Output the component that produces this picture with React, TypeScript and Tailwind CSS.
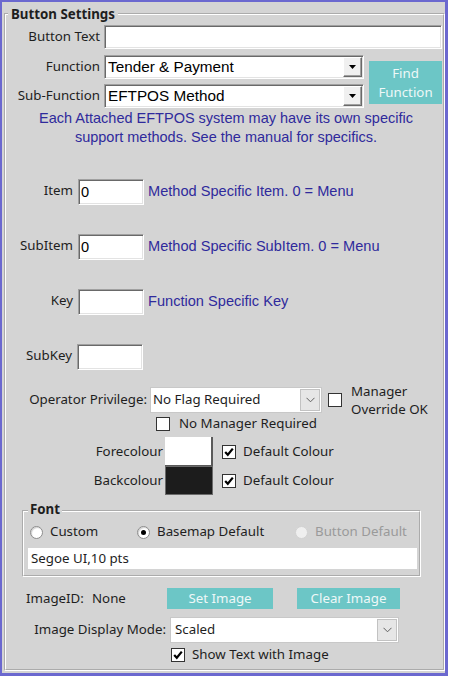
import React from "react";

const SEG = "font-['Noto_Sans',sans-serif]";
const ARI = "font-['Liberation_Sans',Arial,sans-serif]";

const sunken =
  "bg-white border border-t-[#a0a0a0] border-l-[#a0a0a0] border-b-white border-r-white shadow-[inset_1px_1px_0_#696969,inset_-1px_-1px_0_#e3e3e3]";

function Check({ checked }: { checked?: boolean }) {
  return (
    <span className="w-[14px] h-[14px] bg-white border border-[#333333] flex items-center justify-center shrink-0">
      {checked && (
        <svg width="10" height="10" viewBox="0 0 10 10">
          <path d="M1.2 5 L3.8 7.8 L8.8 1.6" fill="none" stroke="#000" strokeWidth="2.2" />
        </svg>
      )}
    </span>
  );
}

function Radio({ on, disabled }: { on?: boolean; disabled?: boolean }) {
  return (
    <span
      className={
        disabled
          ? "w-[13px] h-[13px] rounded-full border border-[#d2d2d2] bg-[#efefef] flex items-center justify-center shrink-0"
          : "w-[13px] h-[13px] rounded-full border border-[#8c8c8c] bg-white shadow-[inset_1px_1px_1px_rgba(0,0,0,0.18)] flex items-center justify-center shrink-0"
      }
    >
      {on && <span className="w-[5px] h-[5px] rounded-full bg-black" />}
    </span>
  );
}

function ClassicCombo({ text }: { text: string }) {
  return (
    <div className={`${sunken} ml-[3px] w-[260px] h-[24px] flex items-center`}>
      <span className={`${ARI} text-[15.3px] text-black pl-[3px] flex-1 leading-none`}>{text}</span>
      <span className="w-[19px] h-[20px] mr-[1px] bg-[#f0f0f0] border border-t-white border-l-white border-b-[#696969] border-r-[#696969] shadow-[inset_-1px_-1px_0_#a0a0a0] flex items-center justify-center">
        <svg width="7" height="4" viewBox="0 0 7 4">
          <path d="M0 0h7L3.5 4z" fill="#000" />
        </svg>
      </span>
    </div>
  );
}

function Chevron() {
  return (
    <span className="w-[20px] h-[22px] mr-[1px] bg-[#e6e6e6] border border-[#c2c2c2] flex items-center justify-center">
      <svg width="9" height="6" viewBox="0 0 9 6">
        <path d="M0.5 0.8 L4.5 4.8 L8.5 0.8" fill="none" stroke="#606060" strokeWidth="1" />
      </svg>
    </span>
  );
}

function NumRow({ label, value, hint, labelW, mt }: { label: string; value: string; hint?: string; labelW: string; mt: string }) {
  return (
    <div className={`flex items-center h-[26px] ${mt}`}>
      <span className={`${labelW} text-right text-[13.3px] pb-[3px]`}>{label}</span>
      <div className={`${sunken} ml-[5px] w-[66px] h-[26px] flex items-center`}>
        <span className={`${ARI} text-[14.6px] text-black pl-[2px] leading-none`}>{value}</span>
      </div>
      {hint && <span className={`${ARI} text-[14.6px] text-[#2f2a9c] ml-[4px]`}>{hint}</span>}
    </div>
  );
}

export default function App() {
  return (
    <div className={`${SEG} w-[448px] h-[676px] bg-[#d4d4d4] border-l-2 border-t-2 border-r-[3px] border-b-[3px] border-[#6b68cf] text-[#1e1e1e] text-[13.3px]`}>
      <fieldset className="ml-[2px] mt-[3px] w-[441px] h-[666px] border-2 [border-style:groove] border-white">
        <legend className="font-bold text-[13.3px] leading-[18px] ml-[2px] px-[3px]">Button Settings</legend>

        {/* Button text */}
        <div className="flex items-center mt-[2px] h-[24px]">
          <span className="w-[95px] text-right pr-[1px]">Button Text</span>
          <div className={`${sunken} ml-[3px] w-[338px] h-[24px]`} />
        </div>

        {/* Function rows + Find button */}
        <div className="flex mt-[6px]">
          <div className="flex flex-col">
            <div className="flex items-center h-[24px]">
              <span className="w-[95px] text-right pr-[1px]">Function</span>
              <ClassicCombo text="Tender & Payment" />
            </div>
            <div className="flex items-center h-[24px] mt-[5px]">
              <span className="w-[95px] text-right pr-[1px]">Sub-Function</span>
              <ClassicCombo text="EFTPOS Method" />
            </div>
          </div>
          <div className="ml-[5px] mt-[6px] w-[73px] h-[43px] bg-[#6cc6c6] text-[#eef8f8] text-[13.3px] leading-[19px] flex flex-col items-center justify-center">
            <span>Find</span>
            <span>Function</span>
          </div>
        </div>

        <div className={`${ARI} text-[14.5px] leading-[19px] text-[#2f2a9c] text-center mt-[1px] pl-[3px]`}>
          <div>Each Attached EFTPOS system may have its own specific</div>
          <div>support methods. See the manual for specifics.</div>
        </div>

        <NumRow label="Item" value="0" hint="Method Specific Item. 0 = Menu" labelW="w-[67px]" mt="mt-[32px]" />
        <NumRow label="SubItem" value="0" hint="Method Specific SubItem. 0 = Menu" labelW="w-[67px]" mt="mt-[29px]" />
        <NumRow label="Key" value="" hint="Function Specific Key" labelW="w-[67px]" mt="mt-[29px]" />
        <NumRow label="SubKey" value="" labelW="w-[66px]" mt="mt-[29px]" />

        {/* Operator privilege */}
        <div className="flex items-center h-[26px] mt-[17px]">
          <span className="w-[141px] text-right">Operator Privilege:</span>
          <div className="ml-[3px] w-[172px] h-[26px] bg-white border border-[#c8c8c8] flex items-center">
            <span className="pl-[2px] flex-1">No Flag Required</span>
            <Chevron />
          </div>
          <span className="ml-[6px]">
            <Check />
          </span>
          <div className="ml-[9px] leading-[18px] flex flex-col">
            <span>Manager</span>
            <span>Override OK</span>
          </div>
        </div>

        <div className="flex items-center h-[16px] mt-[3px]">
          <span className="ml-[150px]">
            <Check />
          </span>
          <span className="ml-[9px]">No Manager Required</span>
        </div>

        <div className="flex items-center h-[29px] mt-[5px]">
          <span className="w-[157px] text-right">Forecolour</span>
          <span className="ml-[2px] w-[48px] h-[29px] bg-white border-r-2 border-b border-[#5a5a5a]" />
          <span className="ml-[9px]">
            <Check checked />
          </span>
          <span className="ml-[7px]">Default Colour</span>
        </div>
        <div className="flex items-center h-[29px]">
          <span className="w-[157px] text-right">Backcolour</span>
          <span className="ml-[2px] w-[48px] h-[29px] bg-[#1c1c1c] border border-[#6a6a6a]" />
          <span className="ml-[9px]">
            <Check checked />
          </span>
          <span className="ml-[7px]">Default Colour</span>
        </div>

        {/* Font group */}
        <fieldset className="mt-[7px] ml-[16px] w-[399px] border-2 [border-style:groove] border-white pl-[4px] pr-[2px] pb-[6px]">
          <legend className="font-bold text-[13.3px] leading-[14px] pb-[4px] px-[2px]">Font</legend>
          <div className="flex items-center h-[16px] mt-[4px]">
            <div className="ml-[2px] w-[107px] flex items-center">
              <Radio />
              <span className="ml-[7px]">Custom</span>
            </div>
            <div className="w-[158px] flex items-center">
              <Radio on />
              <span className="ml-[7px]">Basemap Default</span>
            </div>
            <div className="flex items-center">
              <Radio disabled />
              <span className="ml-[7px] text-[#9a9a9a]">Button Default</span>
            </div>
          </div>
          <div className="mt-[8px] w-[389px] h-[21px] bg-white flex items-center">
            <span className="pl-[3px]">Segoe UI,10 pts</span>
          </div>
        </fieldset>

        {/* Image */}
        <div className="flex items-center h-[21px] mt-[11px]">
          <span className="ml-[20px] w-[66px]">ImageID:</span>
          <span className="w-[75px]">None</span>
          <span className="w-[106px] h-[21px] bg-[#6cc6c6] text-[#eef8f8] flex items-center justify-center">Set Image</span>
          <span className="ml-[24px] w-[103px] h-[21px] bg-[#6cc6c6] text-[#eef8f8] flex items-center justify-center">Clear Image</span>
        </div>

        <div className="flex items-center h-[26px] mt-[8px]">
          <span className="w-[160px] text-right">Image Display Mode:</span>
          <div className="ml-[4px] w-[229px] h-[26px] bg-white border border-[#c8c8c8] flex items-center">
            <span className="pl-[4px] flex-1">Scaled</span>
            <Chevron />
          </div>
        </div>

        <div className="flex items-center h-[16px] mt-[4px]">
          <span className="ml-[165px]">
            <Check checked />
          </span>
          <span className="ml-[7px]">Show Text with Image</span>
        </div>
      </fieldset>
    </div>
  );
}
